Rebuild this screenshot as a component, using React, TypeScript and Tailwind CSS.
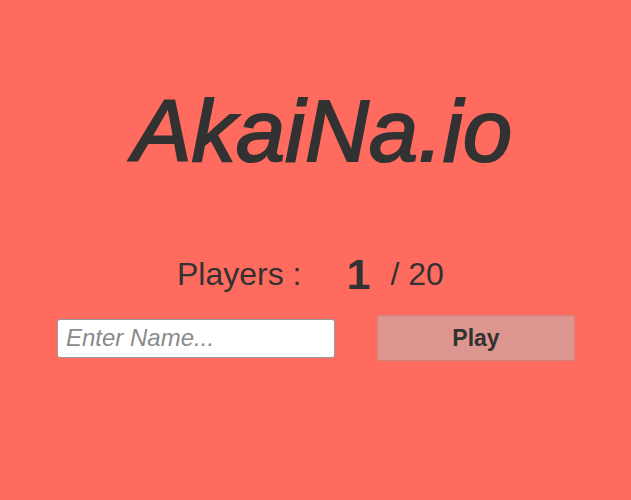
import React from "react";

export default function App() {
  return (
    <div
      className="w-[631px] h-[500px] bg-[#ff6b5e] flex flex-col text-[#323232]"
      style={{ fontFamily: '"Liberation Sans", Arial, sans-serif' }}
    >
      <h1 className="mt-[78px] h-[105px] text-[88px] leading-[105px] italic font-normal text-center pl-[14px] tracking-[0.3px] [-webkit-text-stroke:2.2px_#323232]">
        AkaiNa.io
      </h1>
      <div className="mt-[67px] h-[48px] flex items-center pl-[177px]">
        <span className="text-[32px]">Players :</span>
        <span className="text-[43px] font-bold ml-[45px]">1</span>
        <span className="text-[32px] ml-[20px]">/ 20</span>
      </div>
      <div className="mt-[17px] w-full flex items-center">
        <input
          placeholder="Enter Name..."
          className="ml-[57px] w-[278px] h-[39px] bg-white border border-[#9a9a9a] rounded-[3px] px-[8px] text-[24px] italic placeholder:text-[#8a8a8a] outline-none"
          style={{ fontFamily: '"Liberation Sans", Arial, sans-serif' }}
        />
        <button
          className="ml-[42px] w-[198px] h-[46px] bg-[#dd968f] border border-[#cf857d] rounded-[3px] text-[23px] font-bold text-[#323232]"
          style={{ fontFamily: '"Liberation Sans", Arial, sans-serif' }}
        >
          Play
        </button>
      </div>
    </div>
  );
}
